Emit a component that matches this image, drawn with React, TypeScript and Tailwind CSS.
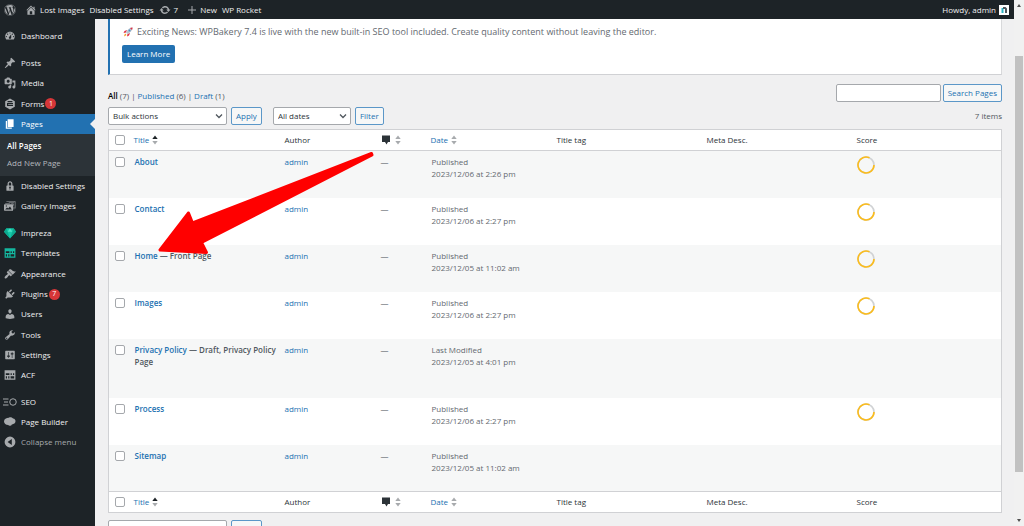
import React, { useState } from "react";
import { FaWordpress } from "react-icons/fa";

interface MenuItem {
  label: string;
  icon: React.ReactNode;
  badge?: number;
  tall?: boolean;
}

interface PageRow {
  title: string;
  state?: string;
  status: string;
  date: string;
  score: boolean;
}

const Dash = ({ d, className = "size-3" }: { d: string; className?: string }) => (
  <svg viewBox="0 0 20 20" className={`shrink-0 fill-current ${className}`} aria-hidden="true">
    <path fillRule="evenodd" d={d} />
  </svg>
);

const paths = {
  home: "M16 8.5l1.53 1.53-1.06 1.06L10 4.6l-6.47 6.49-1.06-1.06L10 2.5l4 4v-2h2v4zm-6-2.46l6 5.99V18H4v-5.97zM12 17v-5H8v5h4z",
  update:
    "M10.2 3.28c3.53 0 6.43 2.61 6.92 6h2.08l-3.5 4-3.5-4h2.32c-.45-1.97-2.21-3.45-4.32-3.45-1.45 0-2.73.71-3.54 1.78L4.95 5.66C6.23 4.2 8.11 3.28 10.2 3.28zm-.4 13.44c-3.52 0-6.43-2.61-6.92-6H.8l3.5-4c1.17 1.33 2.33 2.67 3.5 4H5.48c.45 1.97 2.21 3.45 4.32 3.45 1.45 0 2.73-.71 3.54-1.78l1.71 1.95c-1.28 1.46-3.15 2.38-5.25 2.38z",
  plus: "M18 9v2h-7v7H9v-7H2V9h7V2h2v7z",
  dashboard:
    "M3.76 16h12.48c1.1-1.37 1.76-3.11 1.76-5 0-4.42-3.58-8-8-8s-8 3.58-8 8c0 1.89.66 3.63 1.76 5zM10 4c.55 0 1 .45 1 1s-.45 1-1 1-1-.45-1-1 .45-1 1-1zM6 6c.55 0 1 .45 1 1s-.45 1-1 1-1-.45-1-1 .45-1 1-1zm8 0c.55 0 1 .45 1 1s-.45 1-1 1-1-.45-1-1 .45-1 1-1zm-5.37 5.55L12 7v6c0 1.1-.9 2-2 2s-2-.9-2-2c0-.57.24-1.08.63-1.45zM4 10c.55 0 1 .45 1 1s-.45 1-1 1-1-.45-1-1 .45-1 1-1zm12 0c.55 0 1 .45 1 1s-.45 1-1 1-1-.45-1-1 .45-1 1-1z",
  post: "M10.44 3.02l1.82-1.82 6.36 6.35-1.83 1.82c-1.05-.68-2.48-.57-3.41.36l-.75.75c-.92.93-1.04 2.35-.35 3.41l-1.83 1.82-2.41-2.41-2.8 2.79c-.42.42-3.38 2.71-3.8 2.29s1.86-3.39 2.28-3.81l2.79-2.79L4.1 9.36l1.83-1.82c1.05.69 2.48.57 3.4-.36l.75-.75c.93-.92 1.05-2.35.36-3.41z",
  media:
    "M13 11V4c0-.55-.45-1-1-1h-1.67L9 1H5L3.67 3H2c-.55 0-1 .45-1 1v7c0 .55.45 1 1 1h10c.55 0 1-.45 1-1zM7 4.5c1.38 0 2.5 1.12 2.5 2.5S8.38 9.5 7 9.5 4.5 8.38 4.5 7 5.62 4.5 7 4.5zM14 6h5v10.5c0 1.38-1.12 2.5-2.5 2.5S14 17.88 14 16.5s1.12-2.5 2.5-2.5c.17 0 .34.02.5.05V9h-3V6zm-4 8.05V13h2v3.5c0 1.38-1.12 2.5-2.5 2.5S7 17.88 7 16.5 8.12 14 9.5 14c.17 0 .34.02.5.05z",
  forms: "M10 1l8 4.500v9L10 19l-8-4.500v-9zM5 8.500v5h10v-2H7v-1h8v-2zM6 5v2h8V5z",
  page: "M6 15V2h10v13H6zm-1 1h8v2H3V5h2v11z",
  lock: "M14 9h1c.55 0 1 .45 1 1v7c0 .55-.45 1-1 1H5c-.55 0-1-.45-1-1v-7c0-.55.45-1 1-1h1V6c0-2.210 1.790-4 4-4s4 1.790 4 4v3zm-2 0V6c0-1.100-.9-2-2-2s-2 .9-2 2v3h4zm-1 7l-.36-2.150c.51-.24.86-.75.86-1.350 0-.83-.67-1.500-1.500-1.500s-1.500.67-1.500 1.500c0 .6.35 1.110.86 1.350L9 16h2z",
  gallery: "M4 2h15v12h-1V3H4zM2 5h15v11h-1V6H2zM0 8l1-1h14v11H1l-1-1zm2 8h11l-3-5-3 3-2-1.500zM3 9v2h2V9zM7 4h10v8l-3-5z",
  appearance:
    "M14.48 11.06L7.41 3.99l1.5-1.5c.5-.56 2.3-.47 3.51.32 1.21.8 1.43 1.28 2.91 2.1 1.18.64 2.45 1.26 4.45.85zm-.71.71L6.7 4.7 4.93 6.47c-.39.39-.39 1.02 0 1.41l1.06 1.06c.39.39.39 1.03 0 1.42-.6.6-1.43 1.11-2.21 1.69-.35.26-.7.53-1.01.84C1.43 14.23.4 16.08 1.4 17.07c.99 1 2.84-.03 4.18-1.36.31-.31.58-.66.85-1.02.57-.78 1.08-1.61 1.69-2.21.39-.39 1.02-.39 1.41 0l1.06 1.06c.39.39 1.02.39 1.41 0z",
  plugins:
    "M13.11 4.36L9.87 7.6 8 5.73l3.24-3.24c.35-.34 1.05-.2 1.56.32.52.51.66 1.21.31 1.55zm-8 1.77l.91-1.12 9.01 9.01-1.19.84c-.71.71-2.63 1.16-3.82 1.16H6.14L4.9 17.26c-.59.59-1.54.59-2.12 0-.59-.58-.59-1.53 0-2.12l1.24-1.24v-3.88c0-1.13.4-3.19 1.09-3.89zm7.26 3.97l3.24-3.24c.34-.35 1.04-.21 1.55.31.52.51.66 1.21.31 1.55l-3.24 3.25z",
  users:
    "M10 9.25c-2.27 0-2.73-3.44-2.73-3.44C7 4.02 7.82 2 9.97 2c2.16 0 2.98 2.02 2.71 3.81 0 0-.41 3.44-2.68 3.44zm0 2.57L12.72 10c2.39 0 4.52 2.33 4.52 4.53v2.49s-3.65 1.13-7.24 1.13c-3.65 0-7.24-1.13-7.24-1.13v-2.49c0-2.25 1.94-4.48 4.47-4.48z",
  tools:
    "M16.68 9.77c-1.34 1.34-3.3 1.67-4.95.99l-5.41 6.52c-.99.99-2.59.99-3.58 0s-.99-2.59 0-3.57l6.52-5.42c-.68-1.65-.35-3.61.99-4.95 1.28-1.28 3.12-1.62 4.72-1.06l-2.89 2.89 2.82 2.82 2.86-2.87c.53 1.58.18 3.39-1.08 4.65zM3.81 16.21c.4.39 1.04.39 1.43 0 .4-.4.4-1.04 0-1.43-.39-.4-1.03-.4-1.43 0-.39.39-.39 1.03 0 1.43z",
  settings:
    "M18 16V4c0-.55-.45-1-1-1H3c-.55 0-1 .45-1 1v12c0 .55.45 1 1 1h14c.55 0 1-.45 1-1zM8 11h1c.55 0 1 .45 1 1s-.45 1-1 1H8v1.5c0 .28-.22.5-.5.5s-.5-.22-.5-.5V13H6c-.55 0-1-.45-1-1s.45-1 1-1h1V5.5c0-.28.22-.5.5-.5s.5.22.5.5V11zm5-2h-1c-.55 0-1-.45-1-1s.45-1 1-1h1V5.5c0-.28.22-.5.5-.5s.5.22.5.5V7h1c.55 0 1 .45 1 1s-.45 1-1 1h-1v5.5c0 .28-.22.5-.5.5s-.5-.22-.5-.5V9z",
  grid: "M1 2h18v16H1zM3 7v3h6V7zm8 0v3h2V7zm4 0v3h2V7zM3 12v4h2v-4zm4 0v4h2v-4zm4 0v4h6v-4z",
  builder: "M8 3c3-2 6 0 7 1 3 0 5 3 4 6-1 3-4 4-6 4-1 3-5 3-6 1-4 0-7-3-7-6 0-4 4-6 8-6z",
  collapse: "M10 1a9 9 0 1 1 0 18 9 9 0 0 1 0-18zM13 5l-7 5 7 5z",
  comment: "M2 1h16v13h-4l-3 5-3-5H2z",
};

const contentMenu: MenuItem[] = [
  { label: "Posts", icon: <Dash d={paths.post} /> },
  { label: "Media", icon: <Dash d={paths.media} /> },
  { label: "Forms", icon: <Dash d={paths.forms} />, badge: 1, tall: true },
];

const lockedMenu: MenuItem[] = [
  { label: "Disabled Settings", icon: <Dash d={paths.lock} /> },
  { label: "Gallery Images", icon: <Dash d={paths.gallery} /> },
];

const adminMenu: MenuItem[] = [
  {
    label: "Impreza",
    icon: (
      <svg viewBox="0 0 20 20" className="size-3 shrink-0" aria-hidden="true">
        <path d="M4 2h12l4 6-10 11L0 8z" fill="#14c8a8" />
        <path d="M4 2L6 8l4 11L0 8zM16 2l-2 6-4 11L20 8z" fill="#0da98f" />
        <path d="M6 8l4-6 4 6z" fill="#4be3c6" />
      </svg>
    ),
  },
  { label: "Templates", icon: <Dash d={paths.grid} className="size-3 text-[#14b8a0]" /> },
  { label: "Appearance", icon: <Dash d={paths.appearance} />, tall: true },
  { label: "Plugins", icon: <Dash d={paths.plugins} />, badge: 7 },
  { label: "Users", icon: <Dash d={paths.users} /> },
  { label: "Tools", icon: <Dash d={paths.tools} />, tall: true },
  { label: "Settings", icon: <Dash d={paths.settings} /> },
  { label: "ACF", icon: <Dash d={paths.grid} /> },
];

const toolMenu: MenuItem[] = [
  {
    label: "SEO",
    icon: (
      <svg viewBox="0 0 28 16" className="-mx-px h-2 w-3.5 shrink-0" fill="none" stroke="currentColor" strokeWidth="2" aria-hidden="true">
        <path d="M0 2h11M2 8h8M0 14h11" />
        <circle cx="20" cy="8" r="6.500" />
      </svg>
    ),
  },
  { label: "Page Builder", icon: <Dash d={paths.builder} /> },
];

const rows: PageRow[] = [
  { title: "About", status: "Published", date: "2023/12/06 at 2:26 pm", score: true },
  { title: "Contact", status: "Published", date: "2023/12/06 at 2:27 pm", score: true },
  { title: "Home", state: "Front Page", status: "Published", date: "2023/12/05 at 11:02 am", score: true },
  { title: "Images", status: "Published", date: "2023/12/06 at 2:27 pm", score: true },
  { title: "Privacy Policy", state: "Draft, Privacy Policy Page", status: "Last Modified", date: "2023/12/05 at 4:01 pm", score: false },
  { title: "Process", status: "Published", date: "2023/12/06 at 2:27 pm", score: true },
  { title: "Sitemap", status: "Published", date: "2023/12/05 at 11:02 am", score: false },
];

const MenuGroup = ({ items }: { items: MenuItem[] }) => (
  <ul>
    {items.map((item) => (
      <li key={item.label}>
        <a href="#" className={`flex items-center gap-[5px] pl-1 ${item.tall ? "h-[21px]" : "h-5"}`}>
          <span className="flex text-[#a7aaad]">{item.icon}</span>
          <span className="whitespace-nowrap">{item.label}</span>
          {item.badge && (
            <span className="-ml-1 flex size-[11px] items-center justify-center rounded-full bg-[#d63638] text-[7px] text-white">
              {item.badge}
            </span>
          )}
        </a>
      </li>
    ))}
  </ul>
);

const Checkbox = ({ label }: { label: string }) => (
  <input
    type="checkbox"
    aria-label={label}
    className="block size-2.5 appearance-none rounded-xs border border-[#a5a8ac] bg-white checked:bg-[#2271b1]"
  />
);

const SortArrows = ({ active = false }: { active?: boolean }) => (
  <svg viewBox="0 0 6 10" className="h-2.5 w-1.5" aria-hidden="true">
    <path d="M3 0.500L5.700 4H0.300z" fill={active ? "#1d2327" : "#a7aaad"} />
    <path d="M3 9.500L5.700 6H0.300z" fill="#a7aaad" />
  </svg>
);

const ScoreRing = () => (
  <svg viewBox="0 0 18 18" className="size-[18px]" fill="none" strokeWidth="1.600" role="img" aria-label="SEO score">
    <circle cx="9" cy="9" r="8" stroke="#d0d2d4" />
    <path d="M17 9A8 8 0 1 1 12.500 1.800" stroke="#fbbc1c" />
  </svg>
);

const Select = ({ label, width }: { label: string; width: string }) => (
  <div className={`relative ${width}`}>
    <select
      aria-label={label}
      className="block h-[18px] w-full appearance-none rounded-xs border border-[#a5a8ac] bg-white pl-1 text-[#2c3338]"
    >
      <option>{label}</option>
    </select>
    <svg
      viewBox="0 0 8 8"
      className="pointer-events-none absolute top-[5px] right-1 size-2"
      fill="none"
      stroke="#50575e"
      strokeWidth="1.300"
      aria-hidden="true"
    >
      <path d="M1 2.500l3 3 3-3" />
    </svg>
  </div>
);

const OutlineButton = ({ children }: { children: React.ReactNode }) => (
  <button
    type="button"
    className="h-[18px] cursor-pointer rounded-xs border border-[#5b97c8] bg-[#f6f7f7] px-1 whitespace-nowrap text-[#2271b1]"
  >
    {children}
  </button>
);

const ColumnHeadings = ({ place }: { place: string }) => (
  <tr className="h-[21px] text-left text-[#2c3338]">
    <th className="pl-1.5">
      <Checkbox label={`Select all (${place})`} />
    </th>
    <th className="px-[3px] font-normal">
      <a href="#" className="flex items-center gap-[3px] text-[#2271b1]">
        Title <SortArrows active />
      </a>
    </th>
    <th className="px-[3px] font-normal">Author</th>
    <th className="px-[3px] font-normal">
      <a href="#" aria-label="Comments" className="flex items-center gap-1">
        <Dash d={paths.comment} className="size-2.5" /> <SortArrows />
      </a>
    </th>
    <th className="px-[3px] font-normal">
      <a href="#" className="flex items-center gap-[3px] text-[#2271b1]">
        Date <SortArrows />
      </a>
    </th>
    <th className="px-[3px] font-normal">Title tag</th>
    <th className="px-[3px] font-normal">Meta Desc.</th>
    <th className="px-[3px] font-normal">Score</th>
  </tr>
);

export default function App() {
  const [search, setSearch] = useState("");

  return (
    <div className="flex h-screen overflow-hidden bg-[#f0f0f1] font-['Open_Sans','Noto_Sans',sans-serif] text-[8px] leading-3 text-[#50575e]">
      <div className="flex min-w-0 flex-1 flex-col">
        {/* Admin bar */}
        <header className="flex h-[19px] shrink-0 items-center bg-[#1d2327] pr-[5px] pl-1 text-[#f0f0f1]">
          <FaWordpress className="size-3 text-[#a7aaad]" />
          <a href="#" className="ml-[9px] flex items-center gap-[3px]">
            <Dash d={paths.home} className="size-3 text-[#a7aaad]" />
            Lost Images
          </a>
          <a href="#" className="ml-[5px]">Disabled Settings</a>
          <a href="#" className="ml-[5px] flex items-center gap-[3px]">
            <Dash d={paths.update} className="size-3 text-[#a7aaad]" />7
          </a>
          <a href="#" className="ml-[9px] flex items-center gap-[3px]">
            <Dash d={paths.plus} className="size-2.5 text-[#a7aaad]" />
            New
          </a>
          <a href="#" className="ml-[5px]">WP Rocket</a>
          <a href="#" className="ml-auto flex items-center gap-[3px]">
            Howdy, admin
            <svg viewBox="0 0 10 10" className="size-2.5" aria-hidden="true">
              <rect width="10" height="10" fill="#fff" />
              <path d="M2.500 3h2v5h-2z" fill="#2ab5c4" />
              <path d="M4 2h2.500L8 3.500V8H6V4H4z" fill="#50575e" />
            </svg>
          </a>
        </header>

        <div className="flex min-h-0 flex-1">
          {/* Sidebar */}
          <nav className="flex w-[95px] shrink-0 flex-col gap-[7px] bg-[#1d2327] pt-[7px] text-[#f0f0f1]">
            <MenuGroup items={[{ label: "Dashboard", icon: <Dash d={paths.dashboard} /> }]} />
            <div>
              <MenuGroup items={contentMenu} />
              <a href="#" className="relative flex h-5 items-center gap-[5px] bg-[#2271b1] pl-1 text-white">
                <Dash d={paths.page} />
                Pages
                <span className="absolute top-[5px] right-0 border-y-5 border-r-5 border-y-transparent border-r-[#f0f0f1]" />
              </a>
              <div className="flex h-[42px] flex-col gap-[5px] bg-[#2c3338] px-[7px] pt-1.5">
                <a href="#" className="font-semibold text-white">All Pages</a>
                <a href="#" className="text-[#b4b9be]">Add New Page</a>
              </div>
              <MenuGroup items={lockedMenu} />
            </div>
            <MenuGroup items={adminMenu} />
            <div>
              <MenuGroup items={toolMenu} />
              <button type="button" className="flex h-5 cursor-pointer items-center gap-[5px] pl-1 text-[#a7aaad]">
                <Dash d={paths.collapse} />
                Collapse menu
              </button>
            </div>
          </nav>

          {/* Content */}
          <main className="min-w-0 flex-1 overflow-hidden pr-3 pl-[13px]">
            <section className="h-14 border-r border-b border-l-2 border-r-[#d8d9db] border-b-[#d0d1d4] border-l-[#2271b1] bg-white px-[13px] pt-[7px]">
              <p className="flex items-center gap-1 text-[9px] whitespace-nowrap text-[#646970]">
                <svg viewBox="0 0 20 20" className="size-2.5" aria-hidden="true">
                  <path d="M8 6L3 8l-2 4 5-1zM14 12l-2 5-4 2 1-5z" fill="#dd2e44" />
                  <path d="M19 1c-6 0-10 4-13 10l3 3c6-3 10-7 10-13z" fill="#b9c5d0" />
                  <path d="M19 1c-2 0-4 .500-5 1l4 4c.500-1 1-3 1-5z" fill="#dd2e44" />
                  <circle cx="13" cy="7" r="2" fill="#4a90c4" />
                  <path d="M4 13l3 3-5 3z" fill="#f4900c" />
                </svg>
                Exciting News: WPBakery 7.4 is live with the new built-in SEO tool included. Create quality content without leaving the editor.
              </p>
              <button type="button" className="mt-[7px] -ml-px h-[18px] cursor-pointer rounded-xs bg-[#2271b1] px-[5px] text-white">
                Learn More
              </button>
            </section>

            <div className="mt-[9px] flex items-end justify-between">
              <div className="flex gap-0.5">
                <a href="#"><b className="font-semibold text-black">All</b> (7)</a>
                <span>|</span>
                <a href="#"><span className="text-[#2271b1]">Published</span> (6)</a>
                <span>|</span>
                <a href="#"><span className="text-[#2271b1]">Draft</span> (1)</a>
              </div>
              <form className="flex gap-0.5" onSubmit={(e) => e.preventDefault()}>
                <input
                  type="search"
                  aria-label="Search Pages"
                  value={search}
                  onChange={(e) => setSearch(e.target.value)}
                  className="h-[18px] w-[105px] rounded-xs border border-[#a5a8ac] bg-white px-1"
                />
                <OutlineButton>Search Pages</OutlineButton>
              </form>
            </div>

            <div className="mt-[5px] flex items-center gap-1">
              <Select label="Bulk actions" width="w-[119px]" />
              <OutlineButton>Apply</OutlineButton>
              <div className="ml-[7px]">
                <Select label="All dates" width="w-[78px]" />
              </div>
              <OutlineButton>Filter</OutlineButton>
              <span className="ml-auto">7 items</span>
            </div>

            <div className="relative mt-1">
              <table className="w-full table-fixed border border-[#d0d1d4] bg-white">
                <colgroup>
                  <col className="w-[22px]" />
                  <col className="w-[151px]" />
                  <col className="w-[96px]" />
                  <col className="w-[50px]" />
                  <col className="w-[126px]" />
                  <col className="w-[150px]" />
                  <col className="w-[150px]" />
                  <col />
                </colgroup>
                <thead className="border-b border-[#d0d1d4]">
                  <ColumnHeadings place="top" />
                </thead>
                <tbody>
                  {rows.map((row) => (
                    <tr
                      key={row.title}
                      className={`align-top odd:bg-[#f6f7f7] ${row.title === "Privacy Policy" ? "h-[59px]" : "h-[47px]"}`}
                    >
                      <td className="pt-1.5 pl-1.5">
                        <Checkbox label={`Select ${row.title}`} />
                      </td>
                      <td className="px-1 pt-[5px] font-semibold">
                        <a href="#" className="text-[#2271b1]">{row.title}</a>
                        {row.state && ` — ${row.state}`}
                      </td>
                      <td className="px-[3px] pt-[5px]">
                        <a href="#" className="text-[#2271b1]">admin</a>
                      </td>
                      <td className="px-[3px] pt-[5px]">—</td>
                      <td className="px-1 pt-[5px] text-[#646970]">
                        {row.status}
                        <br />
                        {row.date}
                      </td>
                      <td />
                      <td />
                      <td className="px-[3px] pt-[5px]">{row.score && <ScoreRing />}</td>
                    </tr>
                  ))}
                </tbody>
                <tfoot className="border-t border-[#d0d1d4]">
                  <ColumnHeadings place="bottom" />
                </tfoot>
              </table>

              {/* Pointer to the front page */}
              <svg
                viewBox="0 0 220 108"
                className="pointer-events-none absolute top-5 left-12 h-[108px] w-[220px]"
                fill="#f00"
                stroke="#f00"
                strokeWidth="3"
                strokeLinejoin="round"
                aria-hidden="true"
              >
                <path d="M215.500 4.500L36.500 74l-4-10L4 101l46.500 2.500-5-10L216 6z" />
              </svg>
            </div>

            <div className="mt-[7px] flex gap-1">
              <Select label="Bulk actions" width="w-[119px]" />
              <OutlineButton>Apply</OutlineButton>
            </div>
          </main>
        </div>
      </div>

      {/* Scrollbar */}
      <div className="flex w-2.5 shrink-0 flex-col items-center justify-between bg-[#f1f1f1] py-1" aria-hidden="true">
        <span className="border-x-2 border-b-3 border-x-transparent border-b-[#505050]" />
        <span className="mt-[49px] mb-[47px] w-2 flex-1 bg-[#c1c1c1]" />
        <span className="border-x-2 border-t-3 border-x-transparent border-t-[#505050]" />
      </div>
    </div>
  );
}
